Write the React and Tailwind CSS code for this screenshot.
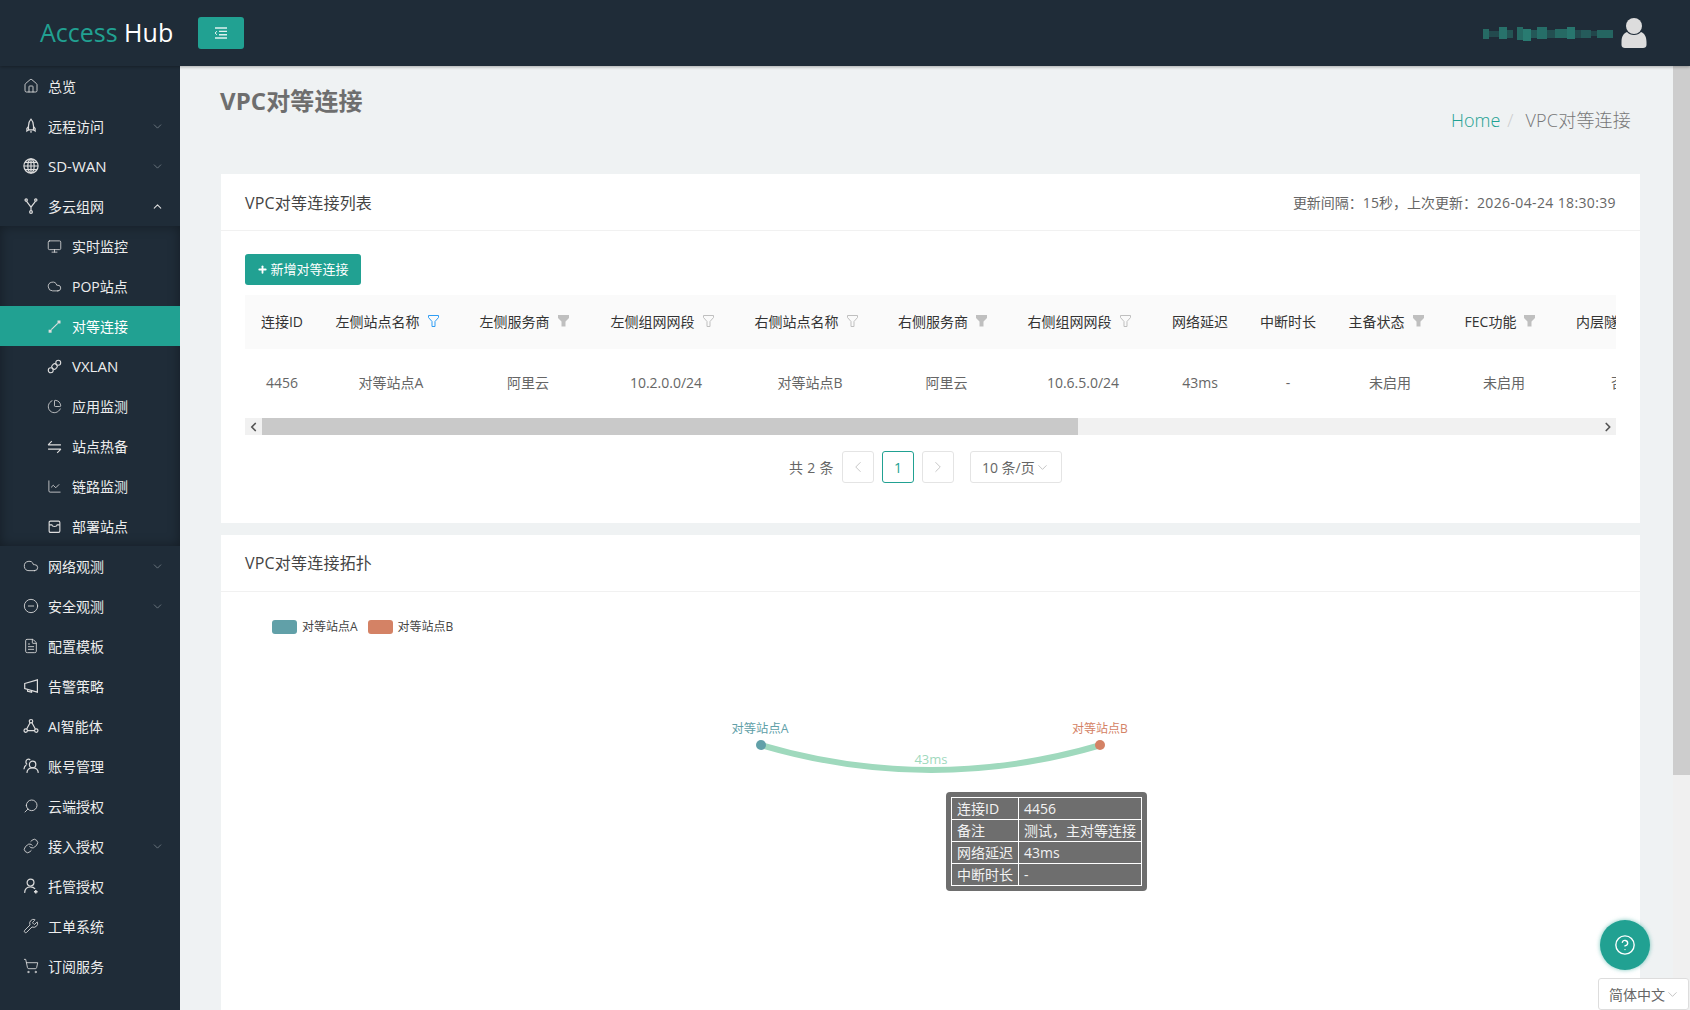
import React from "react";
import {
  Home, Monitor, Cloud, ChartPie, ChartLine, CircleMinus, FileText,
  Search, Link, Wrench, ShoppingCart, ChevronDown, ChevronUp, ChevronLeft, ChevronRight, CircleHelp, Plus,
} from "lucide-react";

const S = 1.3;

const Line = ({ size, children }) => (
  <svg width={size} height={size} viewBox="0 0 14 14" fill="none" stroke="currentColor" strokeWidth="1.05">
    {children}
  </svg>
);

const RocketUp = (p) => (
  <Line size={p.size}>
    <path d="M7 1C8.6 2.6 9.2 4.8 9.2 7V10.4H4.8V7C4.8 4.8 5.4 2.6 7 1Z" />
    <path d="M4.8 7.6L3.4 9.2V11.4L4.8 10.4M9.2 7.6L10.6 9.2V11.4L9.2 10.4M7 11.4V13" />
  </Line>
);
const GlobeLines = (p) => (
  <Line size={p.size}>
    <circle cx="7" cy="7" r="6.2" />
    <ellipse cx="7" cy="7" rx="2.8" ry="6.2" />
    <path d="M7 0.8V13.2M0.8 7H13.2M1.7 3.8H12.3M1.7 10.2H12.3" />
  </Line>
);
const Peer = (p) => (
  <Line size={p.size}>
    <path d="M4 10L10 4" />
    <rect x="1.5" y="10" width="2.8" height="2.8" fill="currentColor" stroke="none" />
    <rect x="9.8" y="1.4" width="2.8" height="2.8" fill="currentColor" stroke="none" />
  </Line>
);
const Chain = (p) => (
  <Line size={p.size}>
    <circle cx="3.5" cy="10.5" r="2.3" />
    <circle cx="10.5" cy="3.5" r="2.3" />
    <rect x="4.6" y="4.8" width="4.8" height="4.4" rx="1.6" transform="rotate(-45 7 7)" />
  </Line>
);
const Swap = (p) => (
  <Line size={p.size}>
    <path d="M1 5.5H13M1 5.5L4.5 2" />
    <path d="M1 9.5H13M13 9.5L9.5 13" />
  </Line>
);
const Box = (p) => (
  <Line size={p.size}>
    <rect x="2" y="2" width="10" height="10.5" rx="1.2" />
    <path d="M2 5.5H4.5C5 7.5 9 7.5 9.5 5.5H12" />
  </Line>
);
const Nodes = (p) => (
  <Line size={p.size}>
    <circle cx="7" cy="2.8" r="1.5" />
    <circle cx="2.4" cy="11" r="1.5" />
    <circle cx="11.6" cy="11" r="1.5" />
    <path d="M6.2 4.2L3.2 9.6M7.8 4.2L10.8 9.6M3.9 11H10.1" />
  </Line>
);
const Fork = (p) => (
  <Line size={p.size}>
    <circle cx="2.8" cy="1.8" r="1" />
    <circle cx="11.2" cy="1.8" r="1" />
    <circle cx="7" cy="12.2" r="1.2" />
    <path d="M3 2.8L7 8L11 2.8M7 8V11" />
  </Line>
);
const Horn = (p) => (
  <Line size={p.size}>
    <path d="M1.5 4.8L12.6 1.6V12.4L1.5 9.2Z" />
    <path d="M4 10V11.6L7.5 12.4V11" />
  </Line>
);
const Account = (p) => (
  <Line size={p.size}>
    <circle cx="8.4" cy="5.6" r="2.8" />
    <path d="M3.4 13C3.6 10 5.6 8.6 8.4 8.6C11.2 8.6 13.2 10 13.4 13" />
    <path d="M6.4 1.8C5.6 1 4.4 0.9 3.6 1.4C2.2 2.2 2.2 4.6 3.6 5.6M2.8 6.2C1.6 7 1 8.2 0.8 9.8" />
  </Line>
);
const Hosted = (p) => (
  <Line size={p.size}>
    <circle cx="6.6" cy="4" r="3" />
    <path d="M1.4 13C1.6 9.8 3.6 7.8 6.6 7.8C8.2 7.8 9.6 8.4 10.6 9.6" />
    <path d="M11.2 10.4V13.6M9.6 12H12.8" strokeWidth="1.3" />
  </Line>
);
const Glass = (p) => <Search size={p.size} strokeWidth={S} className="-scale-x-100" />;

const lu = (Icon) => (p) => <Icon size={p.size} strokeWidth={S} />;

const menu = [
  { label: "总览", icon: lu(Home) },
  { label: "远程访问", icon: RocketUp, arrow: "down" },
  { label: "SD-WAN", icon: GlobeLines, arrow: "down", wide: true },
  { label: "多云组网", icon: Fork, arrow: "up" },
];
const sub = [
  { label: "实时监控", icon: lu(Monitor) },
  { label: "POP站点", icon: lu(Cloud) },
  { label: "对等连接", icon: Peer, active: true },
  { label: "VXLAN", icon: Chain, wide: true },
  { label: "应用监测", icon: lu(ChartPie) },
  { label: "站点热备", icon: Swap },
  { label: "链路监测", icon: lu(ChartLine) },
  { label: "部署站点", icon: Box },
];
const menu2 = [
  { label: "网络观测", icon: lu(Cloud), arrow: "down" },
  { label: "安全观测", icon: lu(CircleMinus), arrow: "down" },
  { label: "配置模板", icon: lu(FileText) },
  { label: "告警策略", icon: Horn },
  { label: "AI智能体", icon: Nodes },
  { label: "账号管理", icon: Account },
  { label: "云端授权", icon: Glass },
  { label: "接入授权", icon: lu(Link), arrow: "down" },
  { label: "托管授权", icon: Hosted },
  { label: "工单系统", icon: lu(Wrench) },
  { label: "订阅服务", icon: lu(ShoppingCart) },
];

function MenuItem({ item }) {
  const Icon = item.icon;
  return (
    <div className="h-10 flex items-center text-[14px] text-[#eeeeee]">
      <div className="w-[48px] pl-[23px] shrink-0 text-[#dddddd]">
        <Icon size={16} />
      </div>
      <span className={"flex-1 " + (item.wide ? "text-[15px]" : "")}>{item.label}</span>
      {item.arrow === "down" && <ChevronDown size={13} strokeWidth={1.4} className="mr-[16px] text-[#7d8890]" />}
      {item.arrow === "up" && <ChevronUp size={13} strokeWidth={2} className="mr-[16px] text-[#dddddd]" />}
    </div>
  );
}

function SubItem({ item }) {
  const Icon = item.icon;
  return (
    <div className={"h-10 flex items-center text-[14px] text-[#eeeeee] " + (item.active ? "bg-[#21a192] text-white" : "")}>
      <div className="w-[72px] pl-[47px] shrink-0 text-[#dddddd]">
        <Icon size={15} />
      </div>
      <span className={item.wide ? "text-[15px]" : ""}>{item.label}</span>
    </div>
  );
}

const Funnel = ({ type }) => {
  if (type === "solid")
    return (
      <svg width="11" height="12" viewBox="0 0 11 12" className="text-[#bfbfbf]">
        <path d="M0 0H11V3L7.5 6.5V11.5H3.5V6.5L0 3Z" fill="currentColor" />
      </svg>
    );
  return (
    <svg width="11" height="12" viewBox="0 0 11 12" fill="none" stroke="currentColor" className={type === "blue" ? "text-[#2f9df4]" : "text-[#bfbfbf]"}>
      <path d="M0.5 0.5H10.5V2.5L7 6.5V11.5H4V6.5L0.5 2.5Z" />
    </svg>
  );
};

const cols = [
  { title: "连接ID", value: "4456", cls: "w-[74px]" },
  { title: "左侧站点名称", value: "对等站点A", filter: "blue", cls: "w-[144px]" },
  { title: "左侧服务商", value: "阿里云", filter: "solid", cls: "w-[130px]" },
  { title: "左侧组网网段", value: "10.2.0.0/24", filter: "line", cls: "w-[146px]" },
  { title: "右侧站点名称", value: "对等站点B", filter: "line", cls: "w-[142px]" },
  { title: "右侧服务商", value: "阿里云", filter: "solid", cls: "w-[131px]" },
  { title: "右侧组网网段", value: "10.6.5.0/24", filter: "line", cls: "w-[142px]" },
  { title: "网络延迟", value: "43ms", cls: "w-[92px]" },
  { title: "中断时长", value: "-", cls: "w-[84px]" },
  { title: "主备状态", value: "未启用", filter: "solid", cls: "w-[120px]" },
  { title: "FEC功能", value: "未启用", filter: "solid", cls: "w-[108px]" },
  { title: "内层隧道加密", value: "否", cls: "w-[120px]" },
];

function PeerTable() {
  return (
    <div className="overflow-hidden">
      <table className="table-fixed w-[1433px] border-collapse">
        <thead>
          <tr className="h-[54px] bg-[#fafafa] text-[#333333]">
            {cols.map((c) => (
              <th key={c.title} className={"font-normal text-[14px] whitespace-nowrap pb-[2px] " + c.cls + (c.filter ? " pr-[8px]" : "")}>
                <span className="inline-flex items-center justify-center gap-[8px]">
                  {c.title}
                  {c.filter && <Funnel type={c.filter} />}
                </span>
              </th>
            ))}
          </tr>
        </thead>
        <tbody>
          <tr className="h-[66px] text-[#666666] text-[14px]">
            {cols.map((c) => (
              <td key={c.title} className="text-center">{c.value}</td>
            ))}
          </tr>
        </tbody>
      </table>
      <div className="mt-[3px] h-[17px] bg-[#f1f1f1] flex items-center relative">
        <ChevronLeft size={14} strokeWidth={3} className="text-[#555555] w-[17px]" />
        <div className="h-[17px] w-[816px] bg-[#c9c9c9]" />
        <ChevronRight size={14} strokeWidth={3} className="absolute right-[1px] text-[#555555]" />
      </div>
    </div>
  );
}

function Pager() {
  return (
    <div className="flex items-center justify-center gap-[8px] mt-[16px] h-[32px] text-[14px] text-[#666666] pr-[10px]">
      <span className="tracking-[0.3px]">共 2 条</span>
      <div className="w-[32px] h-[32px] border border-[#e4e4e4] rounded-[3px] flex items-center justify-center text-[#bbbbbb]">
        <ChevronLeft size={18} strokeWidth={1.1} />
      </div>
      <div className="w-[32px] h-[32px] border border-[#21a192] rounded-[3px] flex items-center justify-center text-[#21a192]">1</div>
      <div className="w-[32px] h-[32px] border border-[#e4e4e4] rounded-[3px] flex items-center justify-center text-[#bbbbbb]">
        <ChevronRight size={18} strokeWidth={1.1} />
      </div>
      <div className="ml-[8px] w-[92px] h-[32px] border border-[#e4e4e4] rounded-[3px] flex items-center pl-[11px] whitespace-nowrap">
        10 条/页
        <ChevronDown size={15} strokeWidth={1.1} className="text-[#aaaaaa]" />
      </div>
    </div>
  );
}

function Topology() {
  return (
    <div className="relative flex-1">
      <div className="flex items-center pl-[51px] pt-[26px] text-[12px] text-[#444444]">
        <span className="w-[25px] h-[14px] rounded-[3px] bg-[#61a0a8]" />
        <span className="ml-[5px]">对等站点A</span>
        <span className="ml-[10px] w-[25px] h-[14px] rounded-[3px] bg-[#d48265]" />
        <span className="ml-[5px]">对等站点B</span>
      </div>
      {/* chart area, coordinates are page pixels via the viewBox */}
      <svg className="absolute left-0 top-0" width="1419" height="418" viewBox="221 592 1419 418">
        <path d="M761 745Q931 795 1101 745" fill="none" stroke="#9fd9bd" strokeWidth="6" />
        <circle cx="761" cy="745" r="5" fill="#61a0a8" />
        <circle cx="1100" cy="745" r="5" fill="#d48265" />
        <text x="760" y="733" textAnchor="middle" fontSize="12.3" fill="#61a0a8">对等站点A</text>
        <text x="1100" y="733" textAnchor="middle" fontSize="12" fill="#d48265">对等站点B</text>
        <text x="931" y="764" textAnchor="middle" fontSize="13" fill="#9fd9bd">43ms</text>
      </svg>
      <div className="absolute left-[725px] top-[200px] w-[201px] h-[99px] bg-[#6e6e6e] rounded-[4px] p-[5px] text-[14px] text-[#f2f2f2]">
        <table className="w-full h-full border-collapse border border-white">
          <tbody>
            {[["连接ID", "4456"], ["备注", "测试，主对等连接"], ["网络延迟", "43ms"], ["中断时长", "-"]].map((r) => (
              <tr key={r[0]}>
                <td className="border border-white pl-[5px] w-[67px] leading-none">{r[0]}</td>
                <td className="border border-white pl-[5px] leading-none whitespace-nowrap">{r[1]}</td>
              </tr>
            ))}
          </tbody>
        </table>
      </div>
    </div>
  );
}

// blurred-out account name
const mosaic = [
  [0, 6, 0.7, 5, 10], [6, 10, 0.35, 7, 6], [16, 8, 0.8, 3, 12], [24, 6, 0.45, 6, 8], [34, 6, 0.7, 3, 13], [40, 8, 0.9, 5, 12],
  [48, 6, 0.5, 6, 8], [54, 10, 0.75, 3, 12], [64, 8, 0.4, 6, 8], [72, 12, 0.7, 5, 9], [84, 8, 0.85, 3, 12], [92, 6, 0.35, 6, 8],
  [98, 10, 0.55, 6, 8], [108, 6, 0.3, 7, 5], [114, 16, 0.65, 6, 8],
];

export default function App() {
  return (
    <div className="h-screen w-full overflow-hidden flex flex-col bg-[#eff2f3] font-['Open_Sans','Noto_Sans_CJK_SC',sans-serif]">
      <header className="h-[66px] shrink-0 bg-[#1f2c38] flex items-center shadow-[0_1px_3px_rgba(0,0,0,0.3)] z-10">
        <div className="w-[198px] pl-[40px] text-[25px] text-white">
          <span className="text-[#21a192]">Access</span> Hub
        </div>
        <button className="w-[46px] h-[32px] bg-[#21a192] rounded-[3px] flex items-center justify-center">
          <svg width="14" height="12" viewBox="0 0 14 12" fill="none" stroke="#ffffff" strokeOpacity="0.85" strokeWidth="1.4">
            <path d="M1 1H13M5 4.4H13M5 7.8H13M1 11H13" />
            <path d="M3 4.2L1 6L3 7.8" strokeWidth="1" />
          </svg>
        </button>
        <div className="ml-auto flex items-center gap-[8px] pr-[43px]">
          <svg width="130" height="18" viewBox="0 0 130 18">
            {mosaic.map((m) => (
              <rect key={m[0]} x={m[0]} y={m[3]} width={m[1]} height={m[4]} fill="#2a8478" fillOpacity={m[2]} />
            ))}
          </svg>
          <svg width="26" height="31" viewBox="0 0 26 31" fill="#dddddd">
            <circle cx="13" cy="8" r="8" />
            <path d="M6 14C9 18 17 18 20 14C23 15 25.5 18 25.5 24V27C25.5 29 24 30 22 30H4C2 30 0.5 29 0.5 27V24C0.5 18 3 15 6 14Z" />
          </svg>
        </div>
      </header>

      <div className="flex-1 flex min-h-0">
        <aside className="w-[180px] shrink-0 bg-[#1f2c38]">
          {menu.map((m) => <MenuItem key={m.label} item={m} />)}
          <div className="bg-[#1f2c38] shadow-[inset_0_0_12px_rgba(0,0,0,0.35)]">
            {sub.map((m) => <SubItem key={m.label} item={m} />)}
          </div>
          {menu2.map((m) => <MenuItem key={m.label} item={m} />)}
        </aside>

        <main className="flex-1 min-w-0 flex flex-col pl-[41px] pr-[33px]">
          <div className="h-[108px] shrink-0 flex justify-between">
            <h1 className="text-[24px] font-bold text-[#6e6e6e] pt-[17px] -ml-[1px] tracking-[0.1px]">VPC对等连接</h1>
            <div className="pt-[41px] pr-[9px] text-[18px] font-light text-[#777777]">
              <span className="text-[#21a192]">Home</span>
              <span className="text-[#cccccc] ml-[7px] mr-[12px]">/</span>
              <span className="tracking-[0.2px]">VPC对等连接</span>
            </div>
          </div>

          <section className="bg-white h-[349px] shrink-0">
            <div className="h-[57px] border-b border-[#f1f1f1] px-[24px] flex items-center justify-between">
              <span className="text-[16px] text-[#444444] tracking-[0.2px] pt-[1px]">VPC对等连接列表</span>
              <span className="text-[14px] text-[#666666]">
                更新间隔：15秒，上次更新：<span className="tracking-[0.37px]">2026-04-24 18:30:39</span>
              </span>
            </div>
            <div className="px-[24px]">
              <button className="mt-[23px] h-[31px] w-[116px] bg-[#21a192] rounded-[3px] text-white text-[13px] flex items-center justify-center gap-[2px]">
                <Plus size={11} strokeWidth={4} />新增对等连接
              </button>
              <div className="mt-[10px]">
                <PeerTable />
                <Pager />
              </div>
            </div>
          </section>

          <section className="bg-white mt-[12px] flex-1 flex flex-col">
            <div className="h-[57px] shrink-0 border-b border-[#f1f1f1] px-[24px] flex items-center">
              <span className="text-[16px] text-[#444444] tracking-[0.2px]">VPC对等连接拓扑</span>
            </div>
            <Topology />
          </section>
        </main>

        <div className="w-[17px] shrink-0 bg-[#f0f0f0]">
          <div className="h-[709px] bg-[#cdcdcd]" />
        </div>
      </div>

      <button className="fixed left-[1600px] top-[920px] w-[50px] h-[50px] rounded-full bg-[#21a192] shadow-[0_0_4px_rgba(33,161,146,0.6)] flex items-center justify-center text-white">
        <CircleHelp size={22} strokeWidth={1.5} />
      </button>
      <div className="fixed left-[1598px] top-[978px] w-[91px] h-[32px] bg-white border border-[#dddddd] rounded-[3px] flex items-center pl-[10px] text-[14px] text-[#666666]">
        简体中文
        <ChevronDown size={15} strokeWidth={1.1} className="text-[#aaaaaa]" />
      </div>
    </div>
  );
}
